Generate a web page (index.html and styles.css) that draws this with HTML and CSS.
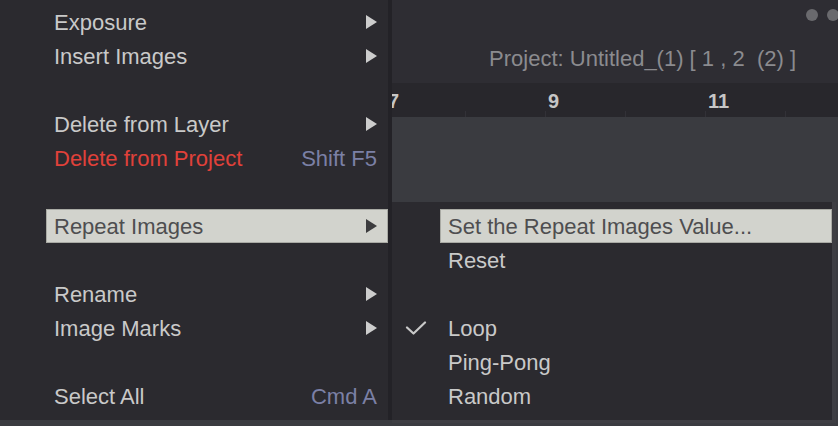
FILE: index.html
```html
<!DOCTYPE html>
<html>
<head>
<meta charset="utf-8">
<link rel="stylesheet" href="styles.css">
</head>
<body>
<div class="app">
  <div class="header">
    <div class="dots"><span class="dot"></span><span class="dot"></span></div>
    <div class="title">Project: Untitled_(1) [ 1 , 2&nbsp; (2) ]</div>
  </div>
  <div class="ruler">
    <div class="cell"><span class="num">7</span></div>
    <div class="cell"></div>
    <div class="cell"><span class="num">9</span></div>
    <div class="cell"></div>
    <div class="cell"><span class="num">11</span></div>
    <div class="cell"></div>
  </div>
  <div class="track"></div>
</div>

<div class="menu main">
  <div class="item"><div class="chk"></div><div class="lbl"><span>Exposure</span><span class="arrow"></span></div></div>
  <div class="item"><div class="chk"></div><div class="lbl"><span>Insert Images</span><span class="arrow"></span></div></div>
  <div class="item"></div>
  <div class="item"><div class="chk"></div><div class="lbl"><span>Delete from Layer</span><span class="arrow"></span></div></div>
  <div class="item"><div class="chk"></div><div class="lbl"><span class="red">Delete from Project</span><span class="sc">Shift F5</span></div></div>
  <div class="item"></div>
  <div class="item"><div class="chk"></div><div class="lbl hl"><span>Repeat Images</span><span class="arrow"></span></div></div>
  <div class="item"></div>
  <div class="item"><div class="chk"></div><div class="lbl"><span>Rename</span><span class="arrow"></span></div></div>
  <div class="item"><div class="chk"></div><div class="lbl"><span>Image Marks</span><span class="arrow"></span></div></div>
  <div class="item"></div>
  <div class="item"><div class="chk"></div><div class="lbl"><span>Select All</span><span class="sc">Cmd A</span></div></div>
</div>

<div class="menu sub">
  <div class="item"><div class="chk"></div><div class="lbl hl"><span>Set the Repeat Images Value...</span></div></div>
  <div class="item"><div class="chk"></div><div class="lbl"><span>Reset</span></div></div>
  <div class="item"></div>
  <div class="item"><div class="chk"><svg width="48" height="14" viewBox="0 0 48 14"><path d="M15 6.5 L21.5 12.5 L33 1.5" fill="none" stroke="#c9c9c9" stroke-width="2.2" stroke-linecap="round" stroke-linejoin="round"/></svg></div><div class="lbl"><span>Loop</span></div></div>
  <div class="item"><div class="chk"></div><div class="lbl"><span>Ping-Pong</span></div></div>
  <div class="item"><div class="chk"></div><div class="lbl"><span>Random</span></div></div>
</div>
</body>
</html>
```
FILE: styles.css
```css
* { box-sizing: border-box; }
html, body { margin: 0; padding: 0; }
body {
  width: 838px;
  height: 426px;
  overflow: hidden;
  position: relative;
  background: #3a3a3f;
  font-family: "Liberation Sans", Arial, sans-serif;
}
.app {
  width: 838px;
  height: 426px;
  display: flex;
  flex-direction: column;
}
.header {
  height: 83px;
  background: #2e2d33;
  display: flex;
  flex-direction: column;
}
.dots {
  display: flex;
  justify-content: flex-end;
  gap: 9px;
  padding-top: 9px;
  margin-right: -1px;
}
.dot {
  width: 12px;
  height: 12px;
  border-radius: 50%;
  background: #6a6a6e;
}
.title {
  margin-top: 26px;
  line-height: 24px;
  text-align: right;
  padding-right: 42px;
  font-size: 22px;
  color: #8b8b8f;
}
.ruler {
  height: 34px;
  background: #28272c;
  display: flex;
  padding-left: 385px;
}
.cell {
  width: 80px;
  flex: none;
  background-image: linear-gradient(#323137, #323137);
  background-repeat: no-repeat;
  background-position: left bottom;
  background-size: 1px 6px;
}
.num {
  display: block;
  padding-left: 3px;
  padding-top: 1px;
  line-height: 34px;
  font-size: 20px;
  font-weight: bold;
  color: #c6c6c6;
}
.track {
  flex: 1;
  background: #3a3b40;
}
.menu {
  position: absolute;
  background: #2b2a2f;
  font-size: 22px;
  color: #c9c9c9;
}
.main {
  left: 0;
  top: 0;
  width: 392px;
  height: 420px;
  padding-top: 5px;
  border-right: 4px solid #232227;
}
.sub {
  left: 392px;
  top: 202px;
  width: 444px;
  height: 221px;
  padding-top: 7px;
  border-right: 4px solid #3e3e43;
  border-bottom: 3px solid #3e3e43;
}
.item {
  height: 34px;
  display: flex;
}
.main .chk { width: 46px; flex: none; }
.sub .chk { width: 48px; flex: none; display: flex; align-items: center; }
.lbl {
  flex: 1;
  display: flex;
  align-items: center;
  justify-content: space-between;
  padding: 2px 11px 0 8px;
}
.hl {
  background: #d2d3cd;
  box-shadow: inset 0 0 0 1px #a9aaa4;
  color: #4e4e50;
}
.red { color: #e0413a; }
.sc { color: #7b80a6; }
.arrow {
  width: 0;
  height: 0;
  border-left: 11px solid #cdcdcd;
  border-top: 7.5px solid transparent;
  border-bottom: 7.5px solid transparent;
  margin-top: -2px;
}
.hl .arrow { border-left-color: #3c3c3e; }
```
